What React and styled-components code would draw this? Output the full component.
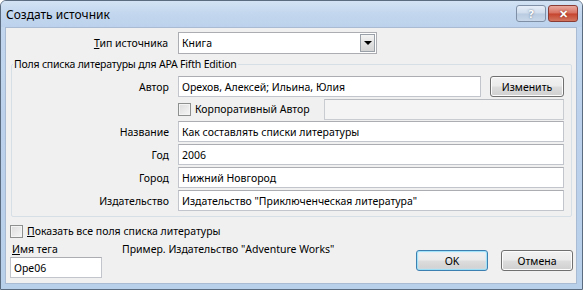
import React from 'react';
import styled, { createGlobalStyle } from 'styled-components';

const GlobalStyle = createGlobalStyle`
    html, body {
        margin: 0;
        padding: 0;
        background: #ffffff;
    }
    body {
        font-family: "Noto Sans", "Liberation Sans", sans-serif;
        font-size: 10.5px;
        color: #000;
    }
`;

const Window = styled.div`
    width: 583px;
    height: 290px;
    box-sizing: border-box;
    display: flex;
    flex-direction: column;
    background: linear-gradient(180deg, #c4d8ef 0%, #bcd2ec 40%, #b9d0ea 100%);
    border: 1px solid #5c6c80;
    border-radius: 6px 6px 0 0;
    overflow: hidden;
`;

const TitleBar = styled.div`
    height: 26px;
    display: flex;
    align-items: center;
    justify-content: space-between;
    padding: 0 4px 0 5px;
    background: linear-gradient(180deg, #d3e3f4 0%, #c3d7ee 45%, #bcd2ec 100%);
`;

const Title = styled.span`
    font-size: 12px;
    color: #000;
`;

const CaptionButtons = styled.div`
    display: flex;
    gap: 2px;
    align-self: flex-start;
    margin-top: 4px;
`;

const CaptionButton = styled.div`
    width: 30px;
    height: 17px;
    box-sizing: border-box;
    border: 1px solid ${p => (p.$close ? '#8a3b34' : '#7f90a6')};
    border-radius: 3px;
    display: flex;
    align-items: center;
    justify-content: center;
    color: #fff;
    font-weight: bold;
    font-size: 11px;
    background: ${p =>
        p.$close
            ? 'linear-gradient(180deg, #e8a89e 0%, #d7705f 48%, #c6442e 52%, #d2755f 100%)'
            : 'linear-gradient(180deg, #e6eef8 0%, #cfdcec 48%, #b9cbe1 52%, #c9d8ea 100%)'};
    text-shadow: 0 0 2px ${p => (p.$close ? '#7a2015' : '#4e607a')};
`;

const Body = styled.div`
    flex: 1;
    margin: 0 5px 5px 4px;
    background: #f0f0f0;
    border: 1px solid #a8bbd3;
    display: flex;
    flex-direction: column;
    padding: 3px 3px 0 4px;
`;

const TypeRow = styled.div`
    display: flex;
    align-items: center;
    height: 23px;
`;

const TypeLabel = styled.label`
    width: 158px;
    text-align: right;
    padding-right: 10px;
    box-sizing: content-box;
`;

const Select = styled.div`
    width: 199px;
    height: 22px;
    box-sizing: border-box;
    background: #fff;
    border: 1px solid #abadb3;
    display: flex;
    align-items: center;
    padding-left: 3px;
`;

const SelectText = styled.span`
    flex: 1;
`;

const DropButton = styled.div`
    width: 15px;
    height: 18px;
    margin-right: 1px;
    box-sizing: border-box;
    border: 1px solid #9aa0a8;
    background: linear-gradient(180deg, #f4f4f4 0%, #e2e2e2 50%, #d4d4d4 100%);
    display: flex;
    align-items: center;
    justify-content: center;
    &::after {
        content: '';
        border-left: 4px solid transparent;
        border-right: 4px solid transparent;
        border-top: 4px solid #000;
        margin-top: 1px;
    }
`;

const Group = styled.fieldset`
    margin: 3px 0 0 1px;
    padding: 5px 7px 0 0;
    border: 1px solid #d5dfe5;
    border-radius: 2px;
    width: 561px;
    height: 160px;
    box-sizing: border-box;
`;

const Legend = styled.legend`
    padding: 0 1px;
    margin-left: 1px;
    letter-spacing: -0.2px;
`;

const FieldGrid = styled.div`
    display: grid;
    grid-template-columns: 157px 1fr;
    column-gap: 9px;
    row-gap: 2px;
    align-items: center;
`;

const FieldLabel = styled.label`
    text-align: right;
`;

const TextBox = styled.div`
    height: 21px;
    box-sizing: border-box;
    background: ${p => (p.$disabled ? '#f4f4f4' : '#fff')};
    border: 1px solid ${p => (p.$disabled ? '#c9ccd1' : '#c2c6cc')};
    border-top-color: ${p => (p.$disabled ? '#b8bbc0' : '#abadb3')};
    display: flex;
    align-items: center;
    padding-left: 3px;
    width: ${p => p.$w || 'auto'};
    flex: ${p => (p.$grow ? 1 : 'none')};
    white-space: nowrap;
    overflow: hidden;
`;

const AuthorLine = styled.div`
    display: flex;
    align-items: center;
    gap: 9px;
`;

const CorpLine = styled.div`
    display: flex;
    align-items: center;
    height: 20px;
`;

const CheckLabel = styled.label`
    display: flex;
    align-items: center;
    gap: 4px;
    width: ${p => p.$w || 'auto'};
`;

const CheckBox = styled.span`
    width: 13px;
    height: 13px;
    box-sizing: border-box;
    border: 1px solid #8e8f8f;
    background: linear-gradient(135deg, #dcdcdc 0%, #f6f6f6 100%);
    box-shadow: inset 0 0 0 1px #f4f4f4;
    display: inline-block;
`;

const Button = styled.div`
    width: ${p => p.$w || '72px'};
    height: 21px;
    box-sizing: border-box;
    border: 1px solid ${p => (p.$default ? '#3c7fb1' : '#707070')};
    border-radius: 3px;
    display: flex;
    align-items: center;
    justify-content: center;
    background: linear-gradient(180deg, #f2f2f2 0%, #ebebeb 48%, #dddddd 52%, #cfcfcf 100%);
    box-shadow: ${p => (p.$default ? 'inset 0 0 0 1px #48d1fb55, inset 0 0 2px 1px #c6ecfc' : 'inset 0 0 0 1px #fcfcfc')};
`;

const Footer = styled.div`
    display: flex;
    justify-content: space-between;
    padding: 6px 0 0 0;
`;

const FooterLeft = styled.div`
    display: flex;
    flex-direction: column;
`;

const ShowAll = styled.div`
    height: 16px;
    display: flex;
    align-items: center;
`;

const TagLine = styled.div`
    display: flex;
    align-items: center;
    height: 17px;
    margin-top: 1px;
`;

const TagLabel = styled.span`
    width: 110px;
    padding-left: 2px;
`;

const ButtonRow = styled.div`
    display: flex;
    gap: 13px;
    align-self: flex-end;
    margin-bottom: 7px;
`;

const App = () => {
    return (
        <>
            <GlobalStyle />
            <Window>
                <TitleBar>
                    <Title>Создать источник</Title>
                    <CaptionButtons>
                        <CaptionButton>?</CaptionButton>
                        <CaptionButton $close>✕</CaptionButton>
                    </CaptionButtons>
                </TitleBar>
                <Body>
                    <TypeRow>
                        <TypeLabel>
                            <u>Т</u>ип источника
                        </TypeLabel>
                        <Select>
                            <SelectText>Книга</SelectText>
                            <DropButton />
                        </Select>
                    </TypeRow>
                    <Group>
                        <Legend>Поля списка литературы для APA Fifth Edition</Legend>
                        <FieldGrid>
                            <FieldLabel>Автор</FieldLabel>
                            <AuthorLine>
                                <TextBox $grow>Орехов, Алексей; Ильина, Юлия</TextBox>
                                <Button $w="74px">Изменить</Button>
                            </AuthorLine>
                            <span />
                            <CorpLine>
                                <CheckLabel $w="146px">
                                    <CheckBox />
                                    Корпоративный Автор
                                </CheckLabel>
                                <TextBox $disabled $grow />
                            </CorpLine>
                            <FieldLabel>Название</FieldLabel>
                            <TextBox>Как составлять списки литературы</TextBox>
                            <FieldLabel>Год</FieldLabel>
                            <TextBox>2006</TextBox>
                            <FieldLabel>Город</FieldLabel>
                            <TextBox>Нижний Новгород</TextBox>
                            <FieldLabel>Издательство</FieldLabel>
                            <TextBox>Издательство "Приключенческая литература"</TextBox>
                        </FieldGrid>
                    </Group>
                    <Footer>
                        <FooterLeft>
                            <ShowAll>
                                <CheckLabel>
                                    <CheckBox />
                                    <span>
                                        <u>П</u>оказать все поля списка литературы
                                    </span>
                                </CheckLabel>
                            </ShowAll>
                            <TagLine>
                                <TagLabel>
                                    <u>И</u>мя тега
                                </TagLabel>
                                <span>Пример. Издательство "Adventure Works"</span>
                            </TagLine>
                            <TextBox $w="92px">Оре06</TextBox>
                        </FooterLeft>
                        <ButtonRow>
                            <Button $default>OK</Button>
                            <Button>Отмена</Button>
                        </ButtonRow>
                    </Footer>
                </Body>
            </Window>
        </>
    );
};

export default App;
